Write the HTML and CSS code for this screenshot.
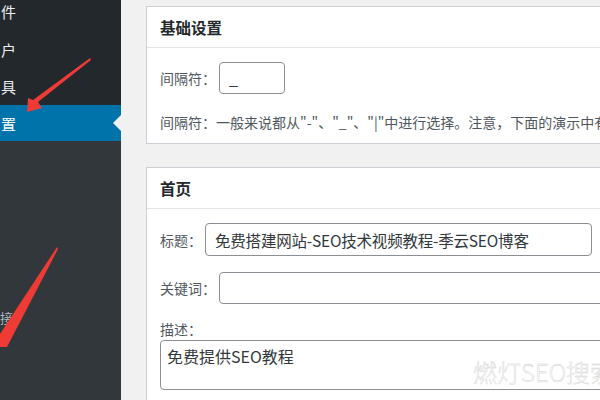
FILE: index.html
```html
<!DOCTYPE html>
<html lang="zh">
<head>
<meta charset="utf-8">
<link rel="stylesheet" href="styles.css">
</head>
<body>
<aside class="sidebar">
  <ul class="menu">
    <li class="menu-item">件</li>
    <li class="menu-item">户</li>
    <li class="menu-item">具</li>
    <li class="menu-item active">置</li>
  </ul>
  <div class="submenu">
    <div class="sub-item">接</div>
  </div>
</aside>
<main class="main">
  <section class="card">
    <h2 class="card-head">基础设置</h2>
    <div class="card-body">
      <div class="row">
        <label class="label">间隔符：</label>
        <div class="input small">_</div>
      </div>
      <p class="desc">间隔符：一般来说都从"-"、"_"、"|"中进行选择。注意，下面的演示中有</p>
    </div>
  </section>
  <section class="card second">
    <h2 class="card-head">首页</h2>
    <div class="card-body">
      <div class="row">
        <label class="label">标题：</label>
        <div class="input title">免费搭建网站-SEO技术视频教程-季云SEO博客</div>
      </div>
      <div class="row kw">
        <label class="label">关键词：</label>
        <div class="input wide"></div>
      </div>
      <label class="label block">描述：</label>
      <div class="textarea">免费提供SEO教程</div>
    </div>
  </section>
</main>
<svg class="arrows" width="600" height="400" viewBox="0 0 600 400">
  <polygon points="90,58 91,60 38,102 42,108 27,112 28,98 33,100" fill="#f03a35"/>
  <polygon points="57,247 58,249 7,347 0,347 0,334" fill="#f03a35"/>
</svg>
<div class="watermark">燃灯SEO搜索</div>
</body>
</html>
```
FILE: styles.css
```css
* { box-sizing: border-box; }
html, body { margin: 0; padding: 0; }
body {
  width: 600px;
  height: 400px;
  overflow: hidden;
  display: flex;
  background: #f1f1f1;
  font-family: "Noto Sans CJK SC", "Noto Sans", sans-serif;
  position: relative;
}
.sidebar {
  width: 121px;
  flex: none;
  display: flex;
  flex-direction: column;
  background: #32373c;
}
.menu {
  list-style: none;
  margin: 0;
  padding: 0;
  background: #23282d;
}
.menu-item {
  height: 37px;
  display: flex;
  align-items: center;
  color: #eeeeee;
  font-size: 15px;
  padding-left: 1px;
}
.menu-item:first-child {
  height: 31px;
  align-items: flex-end;
  padding-bottom: 9px;
}
.menu-item.active {
  height: 36px;
  background: #0073aa;
  color: #ffffff;
  position: relative;
}
.menu-item.active::after {
  content: "";
  position: absolute;
  right: 0;
  top: 10px;
  border-top: 8px solid transparent;
  border-bottom: 8px solid transparent;
  border-right: 8px solid #f1f1f1;
}
.submenu {
  padding-top: 168px;
}
.sub-item {
  color: #b4b9be;
  font-size: 13px;
  line-height: 18px;
}
.main {
  flex: 1;
  padding: 6px 0 0 25px;
  display: flex;
  flex-direction: column;
  gap: 23px;
}
.card {
  width: 480px;
  background: #fff;
  border: 1px solid #ccd0d4;
}
.card-head {
  margin: 0;
  height: 41px;
  border-bottom: 1px solid #e2e4e7;
  display: flex;
  align-items: center;
  padding-left: 13px;
  font-size: 15.5px;
  font-weight: 700;
  color: #23282d;
}
.card-body {
  padding: 14px 0 10px 13px;
}
.row {
  display: flex;
  align-items: center;
}
.label {
  font-size: 14px;
  color: #50575e;
  margin-right: 3px;
  white-space: nowrap;
}
.label.block {
  display: block;
  margin-top: 14px;
  line-height: 22px;
}
.input {
  height: 32px;
  border: 1px solid #8c8f94;
  border-radius: 4px;
  font-size: 16px;
  color: #32373c;
  display: flex;
  align-items: center;
  padding-left: 9px;
  white-space: nowrap;
}
.input.small { width: 66px; }
.input.title { width: 387px; height: 33px; font-size: 15.5px; letter-spacing: -0.2px; }
.input.wide { width: 420px; }
.row.kw { margin-top: 16px; }
.desc {
  margin: 17px 0 0;
  font-size: 14px;
  line-height: 22px;
  color: #50575e;
  white-space: nowrap;
}
.textarea {
  width: 470px;
  height: 50px;
  border: 1px solid #8c8f94;
  border-radius: 4px;
  font-size: 16px;
  color: #32373c;
  padding: 3px 0 0 6px;
  line-height: 24px;
}
.arrows {
  position: absolute;
  left: 0;
  top: 0;
  pointer-events: none;
}
.watermark {
  position: absolute;
  left: 473px;
  top: 356px;
  font-size: 24px;
  line-height: 32px;
  font-weight: 300;
  color: #fbfbfb;
  -webkit-text-stroke: 0.4px #d2d2d2;
  white-space: nowrap;
  font-family: "Noto Sans CJK SC", sans-serif;
}
```
